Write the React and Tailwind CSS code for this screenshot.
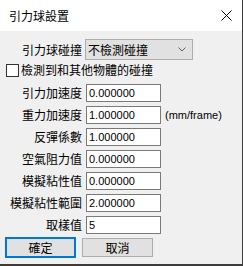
import React from "react";

const cjk = { fontFamily: '"Noto Sans CJK TC", "Noto Sans CJK SC", sans-serif' };
const latin = { fontFamily: '"Liberation Sans", Arial, sans-serif' };

function Field({ label, value, unit }) {
  return (
    <div className="flex items-center h-[18px]">
      <div className="w-[82px] text-right text-[12px] leading-[18px] text-black whitespace-nowrap">{label}</div>
      <div className="ml-[4px] w-[75px] h-[18px] bg-white border border-[#7a7a7a] flex items-center pl-[2px]">
        <span className="text-[11px] leading-none text-black" style={latin}>{value}</span>
      </div>
      {unit && (
        <span className="ml-[4px] text-[11px] leading-none text-black" style={latin}>{unit}</span>
      )}
    </div>
  );
}

export default function App() {
  const fields = [
    { label: "引力加速度", value: "0.000000" },
    { label: "重力加速度", value: "1.000000", unit: "(mm/frame)" },
    { label: "反彈係數", value: "1.000000" },
    { label: "空氣阻力值", value: "0.000000" },
    { label: "模擬粘性值", value: "0.000000" },
    { label: "模擬粘性範圍", value: "2.000000" },
    { label: "取樣值", value: "5" },
  ];

  return (
    <div className="w-[243px] h-[266px] bg-[#f0f0f0] border-r border-b-2 border-[#3c3c3c] flex flex-col overflow-hidden" style={cjk}>
      {/* 標題列 */}
      <div className="h-[31px] bg-white flex items-center justify-between pl-[9px] pr-[10px] shrink-0">
        <span className="text-[12px] leading-none text-black">引力球設置</span>
        <svg width="11" height="11" viewBox="0 0 11 11">
          <path d="M0.5 0.5 L10.5 10.5 M10.5 0.5 L0.5 10.5" stroke="#000" strokeWidth="1" fill="none" />
        </svg>
      </div>

      <div className="flex flex-col pt-[8px]">
        {/* 下拉選單 */}
        <div className="flex items-center h-[21px]">
          <div className="w-[82px] text-right text-[12px] leading-[21px] text-black">引力球碰撞</div>
          <div className="ml-[3px] w-[108px] h-[21px] bg-[#e1e1e1] border border-[#adadad] flex items-center justify-between pl-[2px] pr-[6px]">
            <span className="text-[12px] leading-none text-black">不檢測碰撞</span>
            <svg width="8" height="5" viewBox="0 0 8 5">
              <path d="M0.5 0.5 L4 4 L7.5 0.5" stroke="#606060" strokeWidth="1" fill="none" />
            </svg>
          </div>
        </div>

        {/* 核取方塊 */}
        <div className="flex items-center h-[14px] mt-[3px] pl-[6px]">
          <div className="w-[13px] h-[13px] bg-white border border-[#333333]" />
          <span className="ml-[2px] text-[12px] leading-none text-black">檢測到和其他物體的碰撞</span>
        </div>

        {/* 數值欄位 */}
        <div className="flex flex-col gap-[4px] mt-[7px]">
          {fields.map((f) => (
            <Field key={f.label} label={f.label} value={f.value} unit={f.unit} />
          ))}
        </div>

        {/* 按鈕 */}
        <div className="flex items-center mt-[3px] pl-[5px] gap-[6px]">
          <div className="w-[71px] h-[21px] bg-[#e1e1e1] border-2 border-[#0078d7] flex items-center justify-center text-[12px] leading-none text-black">
            確定
          </div>
          <div className="w-[71px] h-[19px] bg-[#e1e1e1] border border-[#adadad] flex items-center justify-center text-[12px] leading-none text-black">
            取消
          </div>
        </div>
      </div>
    </div>
  );
}
